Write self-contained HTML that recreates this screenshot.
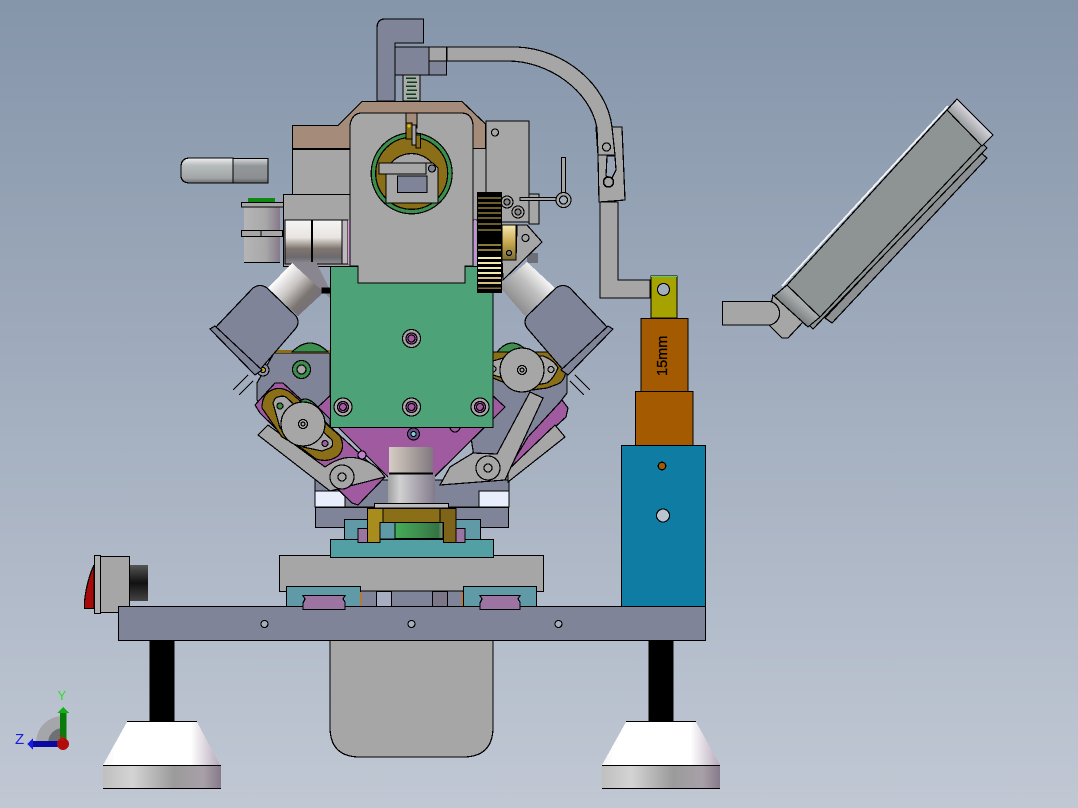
<!DOCTYPE html>
<html>
<head>
<meta charset="utf-8">
<title>CAD assembly view</title>
<style>
html,body{margin:0;padding:0;width:1078px;height:808px;overflow:hidden;background:#a3aebf}
svg{display:block}
text{font-family:"Liberation Sans",sans-serif}
</style>
</head>
<body>
<svg width="1078" height="808" viewBox="0 0 1078 808" xmlns="http://www.w3.org/2000/svg" shape-rendering="crispEdges">
<defs>
<linearGradient id="bg" x1="0" y1="0" x2="0" y2="1"><stop offset="0" stop-color="#8595aa"/><stop offset="1" stop-color="#c1c8d4"/></linearGradient>
<linearGradient id="cone" x1="0" y1="0" x2="1" y2="0"><stop offset="0" stop-color="#f2f2f2"/><stop offset=".1" stop-color="#fff"/><stop offset=".75" stop-color="#fff"/><stop offset="1" stop-color="#b8a9bb"/></linearGradient>
<linearGradient id="footb" x1="0" y1="0" x2="1" y2="0"><stop offset="0" stop-color="#bfbfbf"/><stop offset=".25" stop-color="#d4d4d4"/><stop offset=".6" stop-color="#9b9b9b"/><stop offset=".85" stop-color="#a8a0a8"/><stop offset="1" stop-color="#857b8b"/></linearGradient>
<linearGradient id="hcyl" x1="0" y1="0" x2="0" y2="1"><stop offset="0" stop-color="#f5f5f5"/><stop offset=".4" stop-color="#e8e4e0"/><stop offset=".65" stop-color="#80766f"/><stop offset=".85" stop-color="#6b6a6e"/><stop offset="1" stop-color="#8e8e92"/></linearGradient>
<linearGradient id="handle" x1="0" y1="0" x2="0" y2="1"><stop offset="0" stop-color="#f0f0f0"/><stop offset=".3" stop-color="#b7bcbc"/><stop offset=".8" stop-color="#a2a6a6"/><stop offset="1" stop-color="#6f7070"/></linearGradient>
<linearGradient id="handle2" x1="0" y1="0" x2="0" y2="1"><stop offset="0" stop-color="#d8d8d8"/><stop offset=".3" stop-color="#92979a"/><stop offset=".8" stop-color="#8c9092"/><stop offset="1" stop-color="#606162"/></linearGradient>
<linearGradient id="vcyl" x1="0" y1="0" x2="1" y2="0"><stop offset="0" stop-color="#b5b5b5"/><stop offset=".6" stop-color="#a8a8a8"/><stop offset="1" stop-color="#86798a"/></linearGradient>
<linearGradient id="ccyl1" x1="0" y1="0" x2="1" y2="0"><stop offset="0" stop-color="#d5cdc5"/><stop offset=".45" stop-color="#b0a8a2"/><stop offset="1" stop-color="#807880"/></linearGradient>
<linearGradient id="ccyl2" x1="0" y1="0" x2="1" y2="0"><stop offset="0" stop-color="#a0a0a0"/><stop offset=".25" stop-color="#d0d0d0"/><stop offset="1" stop-color="#837b8c"/></linearGradient>
<linearGradient id="dl" gradientUnits="userSpaceOnUse" x1="280" y1="275" x2="312" y2="305"><stop offset="0" stop-color="#fff"/><stop offset=".4" stop-color="#c8c4c2"/><stop offset=".75" stop-color="#7a7470"/><stop offset="1" stop-color="#77707c"/></linearGradient>
<linearGradient id="dr" gradientUnits="userSpaceOnUse" x1="546" y1="275" x2="514" y2="305"><stop offset="0" stop-color="#fff"/><stop offset=".45" stop-color="#c0c0c0"/><stop offset="1" stop-color="#8c8c8c"/></linearGradient>
<linearGradient id="grn" x1="0" y1="0" x2="1" y2="0"><stop offset="0" stop-color="#45ac57"/><stop offset=".5" stop-color="#3f8f50"/><stop offset=".9" stop-color="#357243"/><stop offset="1" stop-color="#8c9a80"/></linearGradient>
<linearGradient id="brass" x1="0" y1="0" x2="0" y2="1"><stop offset="0" stop-color="#f6e9b0"/><stop offset=".5" stop-color="#c8a850"/><stop offset="1" stop-color="#7d6a30"/></linearGradient>
<linearGradient id="blk" x1="0" y1="0" x2="0" y2="1"><stop offset="0" stop-color="#555"/><stop offset=".5" stop-color="#111"/><stop offset="1" stop-color="#444"/></linearGradient>
<linearGradient id="roll" gradientUnits="userSpaceOnUse" x1="790" y1="322" x2="804" y2="306"><stop offset="0" stop-color="#5e6264"/><stop offset="1" stop-color="#a7abac"/></linearGradient>
<linearGradient id="cap" gradientUnits="userSpaceOnUse" x1="962" y1="128" x2="980" y2="110"><stop offset="0" stop-color="#8f9394"/><stop offset=".8" stop-color="#e4e3ea"/><stop offset="1" stop-color="#f4f4f8"/></linearGradient>
</defs>
<rect width="1078" height="808" fill="url(#bg)"/>

<g stroke="#000" stroke-width="1.2" stroke-linejoin="miter">
<!-- lower body -->
<path d="M330 640H493V727Q493 757 463 757H360Q330 757 330 727Z" fill="#a6a6a6"/>
<rect x="150" y="641" width="24" height="82" fill="#000"/>
<rect x="649" y="641" width="24" height="82" fill="#000"/>
<path d="M127 722H197L220 765H103Z" fill="url(#cone)" stroke="none"/>
<path d="M127 721.500H197" fill="none"/>
<rect x="103" y="765" width="118" height="23" fill="url(#footb)" stroke="none"/>
<path d="M103 765.500H221M103 788.500H221" fill="none"/>
<path d="M626 722H696L720 765H602Z" fill="url(#cone)" stroke="none"/>
<path d="M626 721.500H696" fill="none"/>
<rect x="602" y="765" width="118" height="23" fill="url(#footb)" stroke="none"/>
<path d="M602 765.500H720M602 788.500H720" fill="none"/>

<!-- button -->
<path d="M84.500 608.500V601Q87 580 94 565V608.500Z" fill="#a80a0a"/>
<rect x="94.500" y="555.500" width="6" height="58" fill="#b0b0b0"/>
<rect x="100.500" y="556.500" width="29" height="56" fill="#a6a6a6"/>
<rect x="130" y="565" width="18" height="36" fill="url(#blk)" stroke="none"/>

<!-- base -->
<rect x="279.500" y="555.500" width="264" height="36" fill="#a6a6a6"/>
<rect x="360" y="591" width="103" height="16" fill="#7f8499"/>
<rect x="376.500" y="591.500" width="15" height="15" fill="#a7aec4"/>
<rect x="432.500" y="591.500" width="15" height="15" fill="#7c7788"/>
<rect x="118.500" y="606.500" width="587" height="34" fill="#7f8499"/>
<circle cx="264.500" cy="624" r="3.500" fill="#a8adbc"/><circle cx="411.500" cy="624" r="3.500" fill="#a8adbc"/><circle cx="558.500" cy="624" r="3.500" fill="#a8adbc"/>
<rect x="286.500" y="586.500" width="74" height="20" fill="#5f9aa6"/>
<rect x="463.500" y="586.500" width="73" height="20" fill="#5f9aa6"/>
<path d="M303 595.500H345L343 599 345 602V609.500H303V603L305 599Z" fill="#9c74a2"/>
<path d="M480 595.500H520L518 599 520 602V609.500H480V603L482 599Z" fill="#9c74a2"/>
<rect x="360" y="592" width="1.500" height="14" fill="#c8741a" stroke="none"/>
<rect x="461.500" y="592" width="1.500" height="14" fill="#c8741a" stroke="none"/>

<!-- blue / orange block -->
<rect x="621.500" y="445.500" width="84" height="161" fill="#0f7ca3"/>
<circle cx="662" cy="466" r="3.800" fill="#a35a00"/>
<circle cx="663" cy="515.500" r="6.500" fill="#bac3d0"/>
<rect x="651" y="276" width="26" height="42" fill="#a6a200"/>
<path d="M651 276.500H677" stroke="#50d070" fill="none"/>
<circle cx="663.500" cy="289.500" r="6" fill="#a3aebf"/>
<rect x="641" y="318.500" width="47" height="73" fill="#a35a00"/>
<rect x="635.500" y="391.500" width="57.500" height="54" fill="#a35a00"/>

<!-- L bracket arm -->
<path d="M600 202H618V280H650V298H600Z" fill="#a6a6a6"/>
<path d="M596 127L622 127 625 200 599 202 598 155Z" fill="#a6a6a6"/>
<path d="M447 47H517C565 49 607 85 612 127L615 155 598 155 597 128C590 90 548 61 508 61H447Z" fill="#a6a6a6"/>
<path d="M607 156H615L616 170 612 178 606 176Z" fill="#9aa6b8"/>
<circle cx="606.500" cy="147" r="4" fill="#a6a6a6"/>
<circle cx="608.500" cy="182" r="5" fill="#a6a6a6" stroke-width="1.500"/>

<!-- upper clamp -->
<path d="M377 28Q377 19 385 19H423.500V43H395V101H377Z" fill="#7f8499"/>
<rect x="403" y="75" width="17" height="26" fill="#a8aca8"/>
<g stroke="#0d3a1a" stroke-width="1.500"><path d="M406 78H416M407 82H417M406 86H416M407 90H417M406 94H416M407 98H417" fill="none"/></g>
<rect x="395" y="47" width="34" height="28" fill="#7f8499"/>
<rect x="429" y="47" width="17.500" height="14" fill="#a6a6a6"/>
<rect x="429" y="61" width="17.500" height="14" fill="#7f8499"/>

<!-- back blocks -->
<rect x="292.500" y="149.500" width="58" height="45" fill="#a6a6a6"/>
<rect x="283.500" y="194.500" width="67" height="72" fill="#a6a6a6"/>
<rect x="473" y="148" width="13" height="72" fill="#a6a6a6"/>
<rect x="529" y="194" width="10" height="30" fill="#a6a6a6"/>
<rect x="527" y="253" width="11" height="10" fill="#6c6e78" stroke="none"/>
<path d="M292.500 125.500H338L362 101.500H462L485.500 124V148.500H292.500Z" fill="#a58c7a"/>

<!-- left cylinder + handle -->
<path d="M181 167Q181 158 190 158H233V183H190Q181 183 181 175Z" fill="url(#handle)"/>
<rect x="233" y="158.500" width="35" height="24.500" fill="url(#handle2)"/>
<rect x="244" y="207" width="36" height="55" fill="url(#vcyl)" stroke="none"/>
<path d="M244 262.500H280" fill="none"/>
<rect x="248" y="198" width="27" height="4" fill="#0e8a14" stroke="none"/>
<rect x="241.500" y="202.500" width="42" height="4.500" fill="#a6a6a6"/>
<rect x="241.500" y="230.500" width="41" height="6" fill="#a6a6a6"/>
<path d="M261 230.500V236.500" fill="none"/>
<rect x="285" y="220" width="57" height="44" fill="url(#hcyl)"/>
<path d="M312 220V264" stroke-width="1.600" fill="none"/>
<rect x="342" y="220" width="6" height="44" fill="#bdb9bd"/>
<rect x="348" y="220" width="2" height="44" fill="#d49ad8" stroke="none"/>

<!-- backplates -->
<path d="M257 383L274 353H330V430L345 492H315V470L257 400Z" fill="#7f8499"/>
<path d="M493 353H567V393L508 470V492H479L470 430Z" fill="#7f8499"/>
<rect x="274" y="350" width="56" height="3" fill="#8a6f18" stroke="none"/>
<path d="M292 352Q310 334 328 352Z" fill="#3e8f4e"/>
<path d="M497 352Q512 334 528 352Z" fill="#3e8f4e"/>
<circle cx="301.500" cy="369.500" r="9" fill="#3e8f4e"/>
<circle cx="301.500" cy="369.500" r="4.500" fill="#a6a6a6"/>
<circle cx="263" cy="370" r="6" fill="#8f94a8"/>
<circle cx="263" cy="370" r="2.500" fill="#c0a030"/>

<!-- lower gray -->
<rect x="315" y="480" width="194" height="27" fill="#7f8499"/>
<rect x="315" y="491" width="30" height="16" fill="#e8eefb"/>
<rect x="479" y="491" width="30" height="16" fill="#e8eefb"/>
<rect x="315.500" y="507.500" width="193" height="20" fill="#7f8499"/>

<!-- purple plates -->
<path d="M318 407L411 500 505 407 411 320Z" fill="#a05aa0"/>
<path d="M562 400L568 408 566 417 508 470 528 437Z" fill="#a05aa0"/>
<path d="M565 437L555 425 508 470 508 482Z" fill="#a6a6a6"/>
<path d="M255 405L275 383H283L385 477 358 505 352 503 260 413Z" fill="#a05aa0"/>
<circle cx="413.500" cy="434" r="6" fill="#6c4f8a"/><circle cx="413.500" cy="434" r="2.500" fill="#79d0d8"/>
<circle cx="362" cy="455" r="4" fill="#c080d0"/>
<circle cx="455" cy="427" r="5" fill="#a05aa0"/>

<!-- levers -->
<path d="M258 435L268 425 325 467Q342 455 357 458 375 462 385 477L330 491Z" fill="#a6a6a6"/>
<circle cx="342" cy="477" r="12" fill="#a6a6a6"/><circle cx="342" cy="477" r="4" fill="#a6a6a6"/>
<path d="M530 392L543 398 505 480 440 485 450 467 473 453 497 454Z" fill="#a6a6a6"/>
<circle cx="488" cy="468" r="12" fill="#a6a6a6"/><circle cx="488" cy="468" r="4" fill="#a6a6a6"/>

<!-- left cam -->
<path d="M297 405Q304 392 318 407Z" fill="#3e8f4e"/>
<path d="M262 408Q262 394 272 390 280 386 290 392L340 436Q346 448 338 456 328 463 316 459L300 447 282 437Z" fill="#8a6f18"/>
<path d="M273 403Q275 397 278 397 284 395 287 398L332 440Q334 446 330 448L322 451 303 447 280 428Z" fill="#a6a6a6"/>
<circle cx="280" cy="406" r="3" fill="#3e8f4e"/>
<circle cx="325" cy="443.500" r="3" fill="#a05aa0"/>
<circle cx="303" cy="424" r="22" fill="#a6a6a6"/>
<circle cx="303" cy="424" r="4.500" fill="none"/><circle cx="303" cy="424" r="2" fill="none"/>

<!-- right cam -->
<path d="M493 352H556Q566 356 566 368 566 380 558 384L547 388 525 391 493 378Z" fill="#8a6f18"/>
<path d="M493 361L510 356H543Q554 360 558 368 554 378 547 383L530 386 493 375Z" fill="#a6a6a6"/>
<circle cx="551" cy="369.500" r="3" fill="#a6a6a6"/>
<circle cx="493" cy="369" r="3" fill="#a6a6a6"/>
<circle cx="522" cy="370" r="22" fill="#a6a6a6"/>
<circle cx="522" cy="370" r="4.500" fill="none"/><circle cx="522" cy="370" r="2" fill="none"/>

<!-- diagonal cylinders -->
<path d="M268 288L298 316 324 292 292 263Z" fill="url(#dl)" stroke="none"/>
<path d="M292 263L330 298V290L316 262H305Z" fill="#8a8690" stroke="none"/>
<path d="M555 288L525 316 499 286 527 262Z" fill="url(#dr)" stroke="none"/>
<path d="M322 288H330V293H322Z" fill="#000"/>

<!-- motors -->
<path d="M253 288Q260 283 267 288L296 316Q300 322 296 328L258 372 215 328Z" fill="#7f8499"/>
<path d="M215 326L210 329 255 375 262 370Z" fill="#7f8499"/>
<path d="M248 375L233 390M253 381L239 395" fill="none"/>
<path d="M570 288Q563 283 556 288L527 316Q523 322 527 328L565 372 608 328Z" fill="#7f8499"/>
<path d="M608 326L613 329 568 375 561 370Z" fill="#7f8499"/>
<path d="M575 375L590 390M570 381L584 395" fill="none"/>

<!-- center top -->
<path d="M350 125Q352 113 362 113H406V128H417V113H461Q472 113 473 125V266H465V283H358V266H350Z" fill="#a6a6a6"/>
<path d="M406 113H417V125H406Z" fill="#a58c7a"/>
<circle cx="411.700" cy="173.300" r="40.500" fill="#3e8f4e"/>
<circle cx="411.700" cy="173.300" r="36" fill="#8a6f18"/>
<path d="M391 163A27 27 0 0 1 432 163Z" fill="#a6a6a6"/>
<path d="M379 163H433L438 168V203H386V174H379Z" fill="#a6a6a6"/>
<path d="M426 163V174H386" fill="none"/>
<rect x="397.500" y="176" width="29.500" height="16.500" fill="#7f8499"/>
<circle cx="432" cy="168.500" r="3.500" fill="#7f8499"/>
<rect x="412" y="125" width="4" height="20" fill="#a6a6a6"/>
<rect x="406" y="123" width="6" height="16" fill="#8a6f18"/>
<rect x="416" y="135" width="4.500" height="13" fill="#8a6f18"/>
<circle cx="409" cy="126" r="1.500" fill="#e8c020" stroke="none"/>

<!-- right plate -->
<rect x="486" y="121" width="43" height="101" fill="#a6a6a6"/>
<circle cx="495" cy="132.500" r="3.500" fill="#a6a6a6"/>
<rect x="520" y="197.500" width="37" height="3" fill="#a6a6a6"/>
<rect x="561.500" y="157.500" width="4" height="36" fill="#a6a6a6"/>
<circle cx="563.500" cy="200" r="7.500" fill="#a6a6a6"/><circle cx="563.500" cy="200" r="4" fill="#a3aebf"/>
<circle cx="507" cy="202" r="6" fill="#a6a6a6"/><circle cx="507" cy="202" r="3" fill="#888"/>
<circle cx="518" cy="212" r="6" fill="#a6a6a6"/><circle cx="518" cy="212" r="3" fill="#888"/>
<path d="M517 225H527L542 242 503 280 502 260 516 258Z" fill="#a6a6a6"/>
<rect x="502" y="225" width="14" height="35" fill="url(#brass)"/>
<circle cx="509" cy="253" r="2.500" fill="#777"/>
<circle cx="525.500" cy="238" r="3.500" fill="#a6a6a6"/>
<rect x="474" y="220" width="2" height="44" fill="#c890d0" stroke="none"/>

<!-- green plate -->
<path d="M330.500 266.500H358V283H465V266.500H493V427.500H330.500Z" fill="#4ea277"/>
<circle cx="411.500" cy="338.500" r="9" fill="#a6a6a6"/><circle cx="411.500" cy="338.500" r="5.500" fill="#a05aa0"/><circle cx="411.500" cy="338.500" r="3.500" fill="#a05aa0"/>
<circle cx="343" cy="407" r="9" fill="#a6a6a6"/><circle cx="343" cy="407" r="5.500" fill="#a05aa0"/><circle cx="343" cy="407" r="3.500" fill="#a05aa0"/>
<circle cx="411.500" cy="407" r="9" fill="#a6a6a6"/><circle cx="411.500" cy="407" r="5.500" fill="#a05aa0"/><circle cx="411.500" cy="407" r="3.500" fill="#a05aa0"/>
<circle cx="480" cy="407" r="9" fill="#a6a6a6"/><circle cx="480" cy="407" r="5.500" fill="#a05aa0"/><circle cx="480" cy="407" r="3.500" fill="#a05aa0"/>
</g>

<!-- gear, in front of the green plate -->
<rect x="477" y="192" width="25" height="101" fill="#000"/>
<g stroke="#6b5c28" stroke-width="2" fill="none"><path d="M478 198H501M478 203H501M478 208H501M478 213H501M478 218H501M478 224H501M478 230H501"/></g>
<g stroke="#8c7a3a" stroke-width="2" fill="none"><path d="M478 245H501M478 250H501"/></g>
<g stroke="#f2e9ac" stroke-width="2.400" fill="none"><path d="M478 258H501M478 263H501M478 268H501M478 273H501"/></g>
<g stroke="#d8bc80" stroke-width="2" fill="none"><path d="M478 278H501M478 283H501"/></g>
<g stroke="#88703a" stroke-width="1.500" fill="none"><path d="M478 288H501"/></g>

<g stroke="#000" stroke-width="1.200">
<!-- center cylinder -->
<rect x="388" y="473" width="47" height="31" fill="url(#ccyl2)" stroke="none"/>
<rect x="389" y="447" width="44" height="26" fill="url(#ccyl1)" stroke="none"/>
<path d="M389 473.500H433" stroke-width="1.600" fill="none"/>
<rect x="374.500" y="503.500" width="74" height="4.500" fill="#bcbcc0"/>

<!-- bottom bridge -->
<rect x="344.500" y="519.500" width="136" height="20" fill="#5f9aa6"/>
<rect x="330.500" y="539.500" width="163" height="18" fill="#52a0a3"/>
<rect x="358" y="528.500" width="10" height="14" fill="#9c74a2"/>
<rect x="455" y="528.500" width="10" height="14" fill="#9c74a2"/>
<rect x="380" y="522" width="15" height="17" fill="#5f9aa6"/>
<rect x="395" y="522.500" width="48" height="16" fill="url(#grn)"/>
<path d="M367.500 508.500H456V542.500H443.500V522.500H380V542.500H367.500Z" fill="#8a6f18"/>
<path d="M367.500 508.500H383V522.500H380V542.500H367.500Z" fill="#a88d1e"/>
<path d="M440 508.500H456V542.500H443.500V522.500H440Z" fill="#7d6418"/>

<!-- tablet -->
<path d="M773 295L767 323 782 338H788L803 322Z" fill="#a6a6a6"/>
<path d="M722.500 301.500H770A12 12 0 0 1 770 325H722.500Z" fill="#a6a6a6"/>
<path d="M980 152L987 158 832 323 825 318Z" fill="#8c9092"/>
<path d="M982 143L987 148 813 329 808 324Z" fill="#8e9394"/>
<path d="M947 110L982 145 820 317 787 285Z" fill="#8e9394"/>
<path d="M957 99L993 135 982 146 947 110Z" fill="url(#cap)"/>
<path d="M774 296L787 285 820 317 808 327Z" fill="url(#roll)"/>
<path d="M782 286L948 106" stroke="#f4f4f4" stroke-width="1.800" fill="none"/>
</g>

<!-- text -->
<text x="0" y="0" transform="translate(667,376) rotate(-90)" font-size="14.500" fill="#000" stroke="#000" stroke-width=".25" shape-rendering="auto">15mm</text>

<!-- triad -->
<path d="M36 743A27 27 0 0 1 63 716V743Z" fill="#a4a6aa"/>
<path d="M48 743A15 15 0 0 1 63 728V743Z" fill="#6e7074"/>
<rect x="60" y="713" width="6.500" height="27" fill="#0a7a0a"/>
<path d="M63 707L69 713H57Z" fill="#12b012"/>
<rect x="32" y="741" width="27" height="6" fill="#0a0aa0"/>
<path d="M27 744L33 738V750Z" fill="#1a1ae0"/>
<circle cx="63" cy="744" r="6" fill="#b00c0c"/>
<text x="57.500" y="700" font-size="13" fill="#2ae02a">Y</text>
<text x="15" y="744" font-size="15" fill="#1a1ae0">Z</text>
<text x="59" y="741" font-size="8" fill="#e01010">X</text>
</svg>
</body>
</html>
